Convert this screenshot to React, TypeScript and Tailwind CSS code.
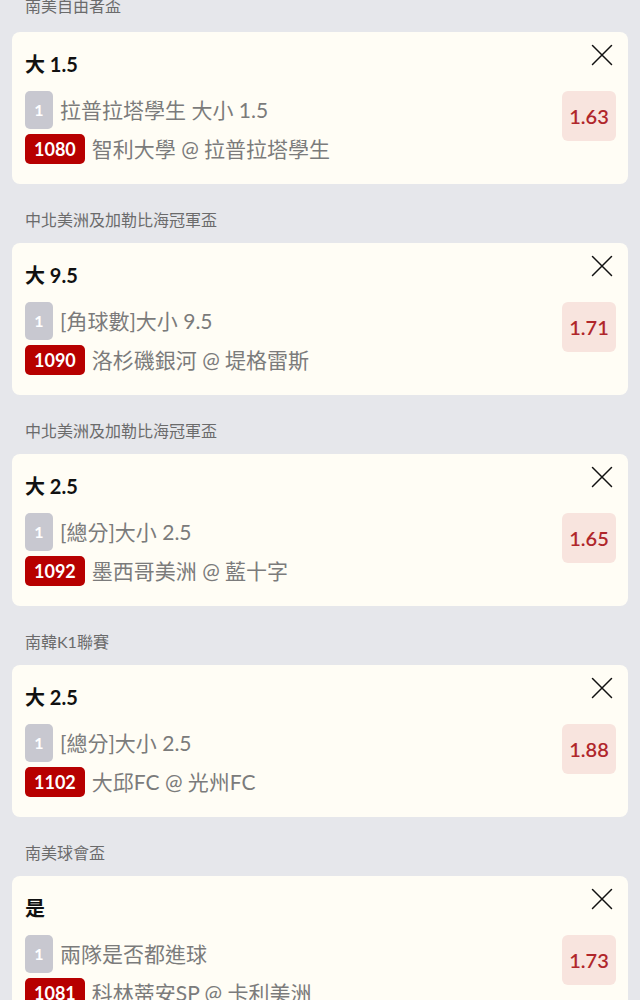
import React from "react";

interface Bet {
  league: string;
  pick: string;
  market: string;
  code: string;
  match: string;
  odds: string;
}

const bets: Bet[] = [
  { league: "南美自由者盃", pick: "大 1.5", market: "拉普拉塔學生 大小 1.5", code: "1080", match: "智利大學 @ 拉普拉塔學生", odds: "1.63" },
  { league: "中北美洲及加勒比海冠軍盃", pick: "大 9.5", market: "[角球數]大小 9.5", code: "1090", match: "洛杉磯銀河 @ 堤格雷斯", odds: "1.71" },
  { league: "中北美洲及加勒比海冠軍盃", pick: "大 2.5", market: "[總分]大小 2.5", code: "1092", match: "墨西哥美洲 @ 藍十字", odds: "1.65" },
  { league: "南韓K1聯賽", pick: "大 2.5", market: "[總分]大小 2.5", code: "1102", match: "大邱FC @ 光州FC", odds: "1.88" },
  { league: "南美球會盃", pick: "是", market: "兩隊是否都進球", code: "1081", match: "科林蒂安SP @ 卡利美洲", odds: "1.73" },
];

const CloseIcon = () => (
  <svg width="24" height="24" viewBox="0 0 24 24" fill="none" stroke="#111" strokeWidth="1.5" strokeLinecap="round">
    <path d="M2.5 2.5 L21.5 21.5 M21.5 2.5 L2.5 21.5" />
  </svg>
);

const BetCard = ({ bet }: { bet: Bet }) => (
  <div className="bg-[#fffdf5] rounded-[8px] mx-[12px] pt-[13px] pb-[20px] pl-[13px] pr-[12px]">
    <div className="flex justify-between items-start">
      <div className="mt-[5px] text-[20px] leading-[28px] font-bold text-[#111]">{bet.pick}</div>
      <button className="-mt-[2px] mr-[2px]">
        <CloseIcon />
      </button>
    </div>
    <div className="mt-[13px] flex justify-between items-start">
      <div className="flex flex-col gap-[5px]">
        <div className="flex items-center gap-[7px]">
          <span className="w-[28px] h-[38px] rounded-[5px] bg-[#c8c8d0] text-white text-[16px] font-bold flex items-center justify-center">1</span>
          <span className="text-[21px] leading-[28px] text-[#7b7b7b]">{bet.market}</span>
        </div>
        <div className="flex items-center gap-[7px]">
          <span className="h-[30px] px-[9px] rounded-[5px] bg-[#b70000] text-white text-[18px] leading-[30px] font-bold">{bet.code}</span>
          <span className="text-[21px] leading-[28px] text-[#7b7b7b]">{bet.match}</span>
        </div>
      </div>
      <div className="w-[54px] h-[50px] rounded-[6px] bg-[#f8e4de] text-[#b0262b] text-[20px] font-semibold flex items-center justify-center">
        {bet.odds}
      </div>
    </div>
  </div>
);

export default function App() {
  return (
    <div className="h-[1000px] overflow-hidden bg-[#e6e7eb]" style={{ fontFamily: "Lato, 'Noto Sans CJK TC', sans-serif" }}>
      <div className="flex flex-col -mt-[30px]">
        {bets.map((bet, i) => (
          <div key={i}>
            <div className={`pt-[24px] px-[25px] text-[16px] leading-[24px] text-[#6b6b6b] ${i === 0 ? "pb-[14px]" : "pb-[11px]"}`}>
              {bet.league}
            </div>
            <BetCard bet={bet} />
          </div>
        ))}
      </div>
    </div>
  );
}
